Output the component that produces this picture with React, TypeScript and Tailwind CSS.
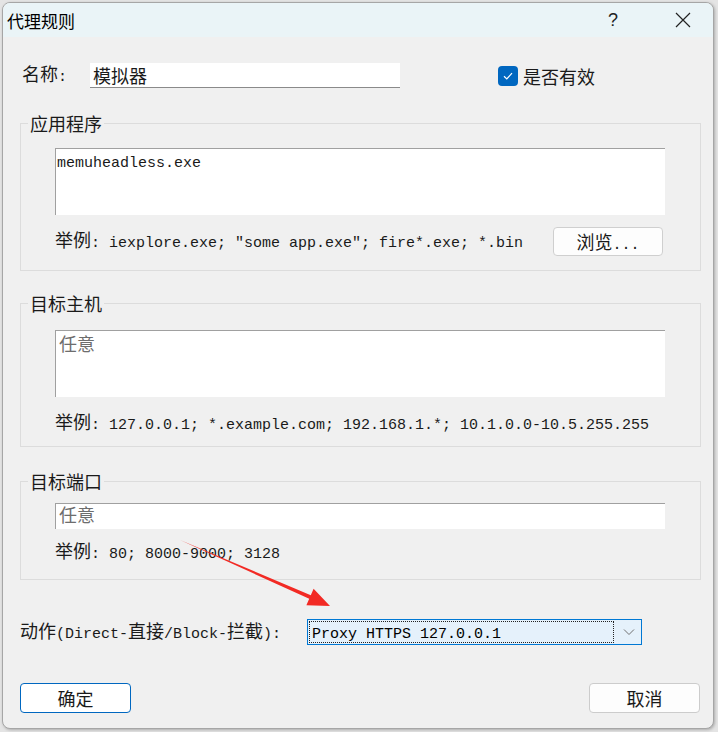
import type { ReactNode } from 'react'

const CJK = /[\u3000-\u9fff\uff00-\uffef]/

// SimSun-like mix: CJK glyphs at 18px, latin at 15px mono (9px per char)
function Mixed({ text }: { text: string }) {
  const runs: { cjk: boolean; s: string }[] = []
  for (const ch of text) {
    const cjk = CJK.test(ch)
    const last = runs[runs.length - 1]
    if (last && last.cjk === cjk) last.s += ch
    else runs.push({ cjk, s: ch })
  }
  return (
    <span>
      {runs.map((r, i) =>
        r.cjk ? (
          <span key={i} className="text-[18px] font-['Noto_Sans_CJK_SC',sans-serif]">
            {r.s}
          </span>
        ) : (
          <span key={i} className="text-[15px] font-['Liberation_Mono','Noto_Sans_CJK_SC',monospace] whitespace-pre">
            {r.s}
          </span>
        )
      )}
    </span>
  )
}

function Group({ title, children, className }: { title: string; children: ReactNode; className: string }) {
  return (
    <fieldset className={'border border-[#dcdcdc] w-[681px] ' + className}>
      <legend className="ml-[-27px] px-[2px] leading-[24px] text-[18px] text-[#1a1a1a] font-['Noto_Sans_CJK_SC',sans-serif]">
        {title}
      </legend>
      {children}
    </fieldset>
  )
}

function Box({ children, h }: { children: ReactNode; h: string }) {
  return (
    <div className={'w-[610px] bg-white border-t border-l border-[#a0a0a0] pl-[1px] ' + h}>{children}</div>
  )
}

function Hint({ text }: { text: string }) {
  return (
    <div className="leading-[24px] text-[#1a1a1a]">
      <Mixed text={text} />
    </div>
  )
}

export default function App() {
  return (
    <div className="relative w-[718px] h-[732px] bg-[#e4e4e4] overflow-hidden">
      <div className="ml-[2px] mt-[2px] w-[712px] h-[727px] rounded-[8px] border border-[#a6a6a6] bg-[#f0f0f0] overflow-hidden shadow-[1px_1px_3px_rgba(0,0,0,0.25)] flex flex-col">
        <div className="h-[34px] shrink-0 bg-[#eaf4f7] flex items-center pl-[4px] font-['Noto_Sans_CJK_SC',sans-serif]">
          <span className="text-[17px] text-black leading-none">代理规则</span>
          <span className="ml-auto text-[18px] text-[#222] leading-none font-['Liberation_Sans',sans-serif]">?</span>
          <svg className="ml-[57px] mr-[22px]" width="16" height="16" viewBox="0 0 16 16">
            <path d="M1 1 L15 15 M15 1 L1 15" stroke="#222" strokeWidth="1.2" fill="none" />
          </svg>
        </div>

        <div className="flex flex-col pl-[17px] text-[#1a1a1a]">
          <div className="mt-[26px] h-[25px] flex items-center">
            <div className="w-[70px] pl-[2px] leading-[24px]">
              <Mixed text="名称:" />
            </div>
            <div className="w-[310px] h-[25px] bg-white border-b border-[#8a8a8a] pl-[3px] leading-[24px] text-[18px] font-['Noto_Sans_CJK_SC',sans-serif]">
              模拟器
            </div>
            <div className="ml-[98px] flex items-center gap-[5px]">
              <div className="w-[20px] h-[20px] rounded-[4px] bg-[#0067c0] flex items-center justify-center">
                <svg width="14" height="14" viewBox="0 0 14 14">
                  <path d="M3 7.3 L5.8 10 L11 4.2" stroke="white" strokeWidth="1.2" fill="none" />
                </svg>
              </div>
              <span className="text-[18px] leading-[24px] font-['Noto_Sans_CJK_SC',sans-serif]">是否有效</span>
            </div>
          </div>

          <Group title="应用程序" className="mt-[23px] pl-[34px] pt-[13px] pb-[14px]">
            <Box h="h-[67px]">
              <div className="leading-[24px]">
                <Mixed text="memuheadless.exe" />
              </div>
            </Box>
            <div className="mt-[12px] h-[29px] flex items-center">
              <Hint text='举例: iexplore.exe; "some app.exe"; fire*.exe; *.bin' />
              <button className="ml-[30px] w-[110px] h-[29px] rounded-[4px] border border-[#cfcfcf] bg-[#fdfdfd] leading-[26px]">
                <Mixed text="浏览..." />
              </button>
            </div>
          </Group>

          <Group title="目标主机" className="mt-[20px] pl-[34px] pt-[15px] pb-[8px]">
            <Box h="h-[67px]">
              <div className="leading-[24px] text-[18px] text-[#6d6d6d] pl-[2px] font-['Noto_Sans_CJK_SC',sans-serif]">任意</div>
            </Box>
            <div className="mt-[12px]">
              <Hint text="举例: 127.0.0.1; *.example.com; 192.168.1.*; 10.1.0.0-10.5.255.255" />
            </div>
          </Group>

          <Group title="目标端口" className="mt-[22px] pl-[34px] pt-[10px] pb-[12px]">
            <Box h="h-[26px]">
              <div className="leading-[20px] text-[18px] text-[#6d6d6d] pl-[2px] font-['Noto_Sans_CJK_SC',sans-serif]">任意</div>
            </Box>
            <div className="mt-[9px]">
              <Hint text="举例: 80; 8000-9000; 3128" />
            </div>
          </Group>

          <div className="mt-[39px] h-[26px] flex items-center">
            <div className="w-[287px] leading-[24px]">
              <Mixed text="动作(Direct-直接/Block-拦截):" />
            </div>
            <div className="w-[335px] h-[26px] bg-[#e5f1fb] border border-[#0078d4] flex items-center pl-[1px]">
              <div className="w-[305px] h-[22px] border border-dotted border-[#222] pl-[2px] leading-[20px] text-black">
                <Mixed text="Proxy HTTPS 127.0.0.1" />
              </div>
              <svg className="ml-[9px]" width="12" height="8" viewBox="0 0 12 8">
                <path d="M1 1.5 L6 6.5 L11 1.5" stroke="#707070" strokeWidth="1" fill="none" />
              </svg>
            </div>
          </div>

          <div className="mt-[38px] flex items-center">
            <button className="w-[111px] h-[30px] rounded-[4px] border border-[#0067c0] bg-white text-[18px] leading-[24px] font-['Noto_Sans_CJK_SC',sans-serif]">
              确定
            </button>
            <button className="ml-[458px] w-[111px] h-[30px] rounded-[4px] border border-[#cccccc] bg-[#fdfdfd] text-[18px] leading-[24px] font-['Noto_Sans_CJK_SC',sans-serif]">
              取消
            </button>
          </div>
        </div>
      </div>

      <svg className="absolute left-0 top-0 pointer-events-none" width="718" height="732" viewBox="0 0 718 732">
        <polygon
          points="180,540 310.8,595.2 313.6,588.8 330,606 306.4,605.2 309.2,598.8"
          fill="#f22a24"
        />
      </svg>
    </div>
  )
}
